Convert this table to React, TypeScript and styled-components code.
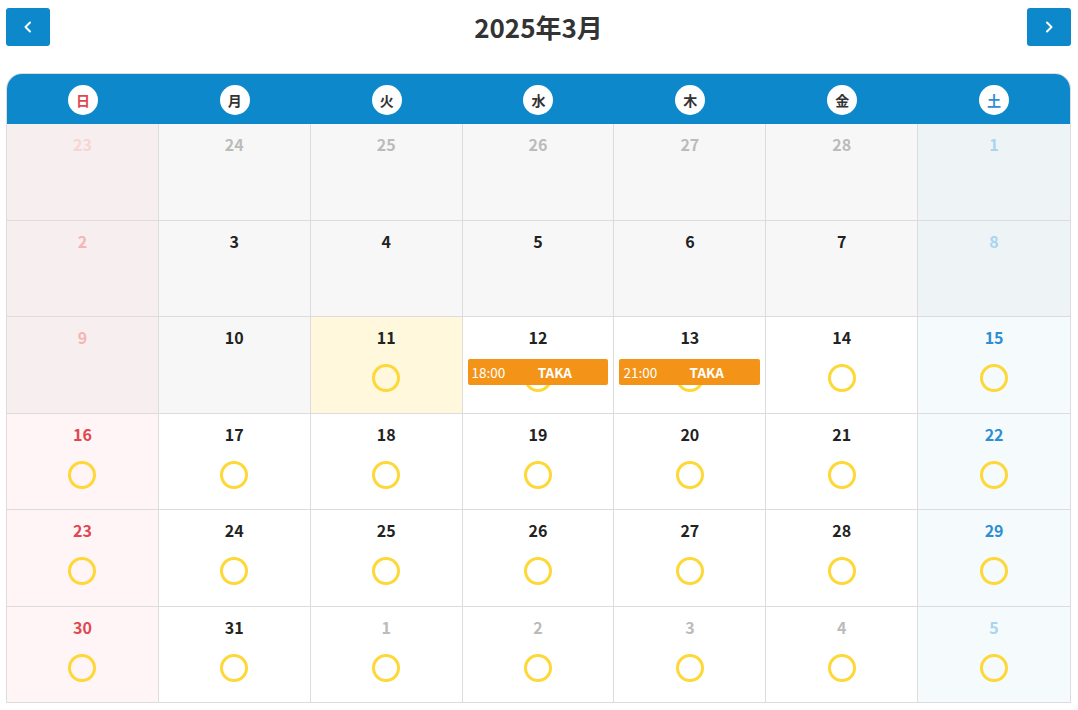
import styled, { createGlobalStyle } from "styled-components";

const GlobalStyle = createGlobalStyle`
  body {
    margin: 0;
    background: #fff;
    font-family: "Noto Sans CJK JP", "Noto Sans", sans-serif;
    color: #222;
  }
`;

type Tone = "sun" | "sat" | "week";
type Phase = "past" | "today" | "future";

type Day = {
  date: number;
  outside: boolean;
  phase: Phase;
  event?: { time: string; name: string };
};

const WEEKDAYS = ["日", "月", "火", "水", "木", "金", "土"];

const buildDays = (): Day[] => {
  const days: Day[] = [];
  [23, 24, 25, 26, 27, 28].forEach((d) =>
    days.push({ date: d, outside: true, phase: "past" })
  );
  for (let d = 1; d <= 31; d++) {
    days.push({
      date: d,
      outside: false,
      phase: d < 11 ? "past" : d === 11 ? "today" : "future",
    });
  }
  [1, 2, 3, 4, 5].forEach((d) =>
    days.push({ date: d, outside: true, phase: "future" })
  );
  // 予約の入っている日
  days[6 + 11].event = { time: "18:00", name: "TAKA" };
  days[6 + 12].event = { time: "21:00", name: "TAKA" };
  return days;
};

const cellBg = (tone: Tone, phase: Phase) => {
  if (phase === "today") return "#fff8dd";
  if (phase === "past") {
    if (tone === "sun") return "#f7eeef";
    if (tone === "sat") return "#eef3f6";
    return "#f7f7f7";
  }
  if (tone === "sun") return "#fff5f6";
  if (tone === "sat") return "#f5fafd";
  return "#fff";
};

const numColor = (tone: Tone, day: Day) => {
  const faded = day.outside || day.phase === "past";
  if (tone === "sun") {
    if (day.outside) return "#f9d4d4";
    return faded ? "#f5b5b5" : "#e0474f";
  }
  if (tone === "sat") return faded ? "#a9d5f0" : "#2f8ed2";
  return day.outside ? "#bbbbbb" : "#222";
};

export default function App() {
  const days = buildDays();
  return (
    <>
      <GlobalStyle />
      <Page>
        <Toolbar>
          <NavButton aria-label="前の月">
            <svg width="14" height="14" viewBox="0 0 14 14">
              <path d="M9 2.5 L4.5 7 L9 11.5" fill="none" stroke="#fff" strokeWidth="2" strokeLinecap="round" strokeLinejoin="round" />
            </svg>
          </NavButton>
          <Title>2025年3月</Title>
          <NavButton aria-label="次の月">
            <svg width="14" height="14" viewBox="0 0 14 14">
              <path d="M5 2.5 L9.5 7 L5 11.5" fill="none" stroke="#fff" strokeWidth="2" strokeLinecap="round" strokeLinejoin="round" />
            </svg>
          </NavButton>
        </Toolbar>
        <Calendar>
          <HeadRow>
            {WEEKDAYS.map((w, i) => (
              <HeadCell key={w}>
                <WeekBadge $tone={i === 0 ? "sun" : i === 6 ? "sat" : "week"}>{w}</WeekBadge>
              </HeadCell>
            ))}
          </HeadRow>
          <Grid>
            {days.map((day, i) => {
              const col = i % 7;
              const tone: Tone = col === 0 ? "sun" : col === 6 ? "sat" : "week";
              const showMark = day.phase !== "past";
              return (
                <Cell key={i} $bg={cellBg(tone, day.phase)} $last={col === 6}>
                  <DateNum $color={numColor(tone, day)}>{day.date}</DateNum>
                  {showMark && <Mark />}
                  {day.event && (
                    <EventBar>
                      <EventTime>{day.event.time}</EventTime>
                      <EventName>{day.event.name}</EventName>
                    </EventBar>
                  )}
                </Cell>
              );
            })}
          </Grid>
        </Calendar>
      </Page>
    </>
  );
}

const Page = styled.div`
  padding: 8px 7px 0 6px;
`;

const Toolbar = styled.div`
  display: flex;
  align-items: center;
  justify-content: space-between;
  height: 38px;
  margin-bottom: 27px;
`;

const NavButton = styled.button`
  display: flex;
  align-items: center;
  justify-content: center;
  width: 44px;
  height: 38px;
  padding: 0;
  border: none;
  border-radius: 3px;
  background: #0d88cb;
  cursor: pointer;
`;

const Title = styled.h1`
  margin: 0;
  font-size: 26px;
  font-weight: 700;
  color: #333;
  line-height: 38px;
`;

const Calendar = styled.div`
  border: 1px solid #dcdcdc;
  border-bottom: none;
  border-radius: 16px 16px 0 0;
  overflow: hidden;
`;

const HeadRow = styled.div`
  display: grid;
  grid-template-columns: repeat(7, 1fr);
  height: 50px;
  background: #0d88cb;
`;

const HeadCell = styled.div`
  display: flex;
  align-items: center;
  justify-content: center;
  padding-top: 2px;
`;

const WeekBadge = styled.span<{ $tone: Tone }>`
  display: flex;
  align-items: center;
  justify-content: center;
  width: 30px;
  height: 30px;
  border-radius: 50%;
  background: #fff;
  font-size: 14px;
  font-weight: 700;
  color: ${(p) => (p.$tone === "sun" ? "#e0474f" : p.$tone === "sat" ? "#2f8ed2" : "#333")};
`;

const Grid = styled.div`
  display: grid;
  grid-template-columns: repeat(7, 1fr);
  grid-auto-rows: 96.5px;
`;

const Cell = styled.div<{ $bg: string; $last: boolean }>`
  position: relative;
  display: flex;
  flex-direction: column;
  align-items: center;
  background: ${(p) => p.$bg};
  border-right: ${(p) => (p.$last ? "none" : "1px solid #dcdcdc")};
  border-bottom: 1px solid #dcdcdc;
`;

const DateNum = styled.span<{ $color: string }>`
  margin-top: 8px;
  font-size: 16px;
  line-height: 24px;
  font-weight: 700;
  color: ${(p) => p.$color};
`;

const Mark = styled.span`
  box-sizing: border-box;
  width: 28px;
  height: 28px;
  margin-top: 15px;
  border: 3px solid #fdd838;
  border-radius: 50%;
`;

const EventBar = styled.div`
  position: absolute;
  top: 42px;
  left: 5px;
  right: 5px;
  height: 26px;
  display: flex;
  align-items: center;
  padding: 0 4px;
  background: #f39419;
  border-radius: 2px;
  color: #fff;
  font-size: 13.5px;
`;

const EventTime = styled.span`
  font-weight: 400;
`;

const EventName = styled.span`
  flex: 1;
  text-align: center;
  font-weight: 700;
`;
